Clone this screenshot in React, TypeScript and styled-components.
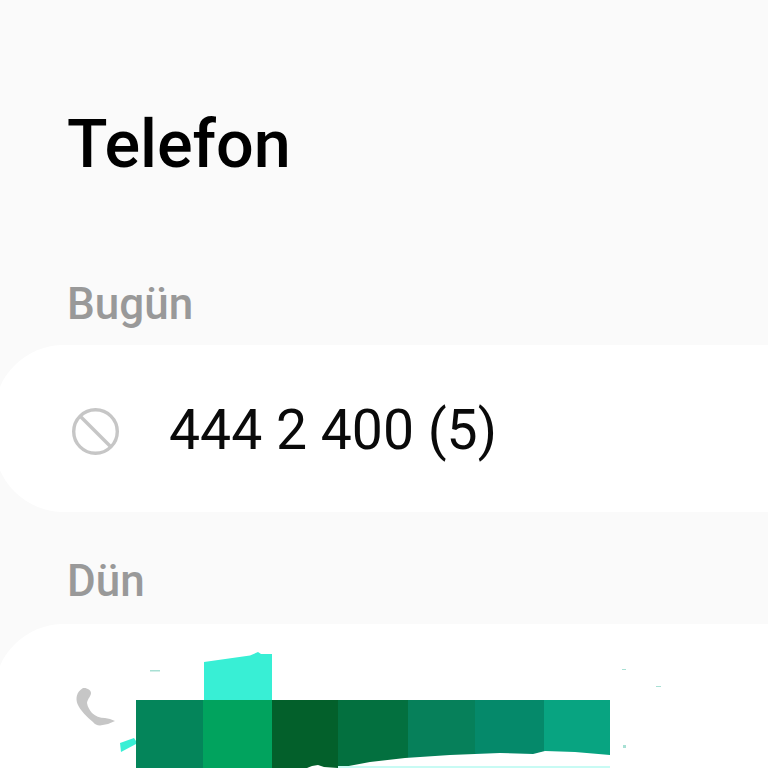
import React from "react";
import styled, { createGlobalStyle } from "styled-components";

const GlobalStyle = createGlobalStyle`
  html, body {
    margin: 0;
    padding: 0;
    height: 100%;
    background: #fafafa;
    overflow: hidden;
  }
`;

const Screen = styled.div`
  width: 768px;
  height: 768px;
  overflow: hidden;
  background: #fafafa;
  font-family: Roboto, "Liberation Sans", sans-serif;
  display: flex;
  flex-direction: column;
`;

const Title = styled.h1`
  margin: 0;
  padding: 106px 0 0 67px;
  height: 76px;
  font-size: 66.5px;
  line-height: 76px;
  font-weight: 500;
  color: #000;
`;

const SectionLabel = styled.div<{ $top: number }>`
  padding: ${(p) => p.$top}px 0 0 67px;
  height: 50px;
  font-size: 44px;
  line-height: 50px;
  font-weight: 500;
  color: #999;
`;

const CallCard = styled.div<{ $height: number; $mt: number }>`
  position: relative;
  box-sizing: border-box;
  flex-shrink: 0;
  margin-top: ${(p) => p.$mt}px;
  height: ${(p) => p.$height}px;
  margin-left: -6px;
  margin-right: -100px;
  padding: 5px 0 0 78px;
  background: #fff;
  border-radius: 70px;
  display: flex;
  align-items: center;
  gap: 50px;
`;

const TopAlignedCard = styled(CallCard)`
  align-items: flex-start;
  padding-top: 61px;
`;

const IconSlot = styled.div`
  width: 47px;
  height: 47px;
  flex-shrink: 0;
  color: #c6c6c6;
`;

const Number = styled.div`
  font-size: 55.3px;
  line-height: 60px;
  color: #0a0a0a;
`;

const Redaction = styled.svg`
  position: absolute;
  left: 6px;
  top: 0;
  pointer-events: none;
`;

const segments = [
  { x: 136, w: 67, c: "#04855a" },
  { x: 203, w: 69, c: "#01a35e" },
  { x: 272, w: 66, c: "#03602b" },
  { x: 338, w: 70, c: "#03703f" },
  { x: 408, w: 67, c: "#06805a" },
  { x: 475, w: 69, c: "#05896a" },
  { x: 544, w: 66, c: "#08a481" },
];

const CARD_TOP = 624;

export default function App() {
  return (
    <Screen>
      <GlobalStyle />
      <Title>Telefon</Title>
      <SectionLabel $top={97}>Bugün</SectionLabel>
      <CallCard $height={167} $mt={16}>
        <IconSlot>
          <svg width="47" height="47" viewBox="0 0 47 47" fill="none" stroke="currentColor" strokeWidth="3.4">
            <circle cx="23.500" cy="23.500" r="21.800" />
            <path d="M8.500 8.500 38.500 38.500" />
          </svg>
        </IconSlot>
        <Number>444 2 400 (5)</Number>
      </CallCard>
      <SectionLabel $top={44}>Dün</SectionLabel>
      <TopAlignedCard $height={300} $mt={18}>
        <IconSlot>
          <svg width="47" height="47" viewBox="0 0 47 47" fill="currentColor">
            <path d="M11 3C15 2.500 19 5 19 8 19 11 15.500 14 15 18 15.500 22 18 25.500 20 28 23 31 28 33 33 33L38 34 43 36 36 39 28 40.500C25 40.500 22.500 39 21 37 15 32 8 25 5.500 19 3.500 14 4 7 11 3z" />
          </svg>
        </IconSlot>
        <Redaction width="768" height="144" viewBox={`0 ${CARD_TOP} 768 144`}>
          <path d="M204 662 250 655.500 258 652 261 654 272 654V700H204z" fill="#38efd5" />
          <path d="M120 743 134 738 136 741V744L121 752z" fill="#38efd5" />
          <path d="M150 670h10v1.500h-10zM622 669h4v1h-4zM656 686h5v1h-5zM623 745h3v3h-3z" fill="#a8e0d4" />
          {segments.map((s) => (
            <rect key={s.x} x={s.x} y={700} width={s.w} height={68} fill={s.c} />
          ))}
          <path d="M307 768 312 766 318 765 324 767 338 768 370 762 405 758 450 755 500 753 533 754 545 751 575 752 610 755V768z" fill="#fff" />
          <rect x="338" y="766" width="272" height="2" fill="#c8fbf4" />
        </Redaction>
      </TopAlignedCard>
    </Screen>
  );
}
